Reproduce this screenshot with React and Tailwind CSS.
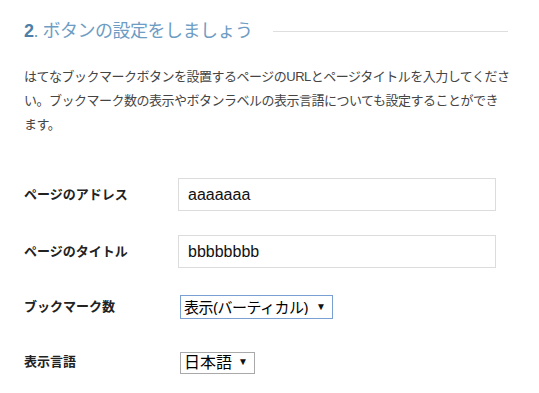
import React, { useState } from "react";

function SelectBox({ value, options, onChange, className, textClass, focused }) {
  return (
    <div className={"relative " + className}>
      <select
        value={value}
        onChange={(e) => onChange(e.target.value)}
        className={
          "appearance-none w-full h-full bg-white pl-[3px] pr-5 leading-none text-black outline-none rounded-none border " +
          textClass +
          " " +
          (focused ? "border-[#7a9fd2]" : "border-[#a9a9a9]")
        }
      >
        {options.map((o) => (
          <option key={o} value={o}>
            {o}
          </option>
        ))}
      </select>
      {/* dropdown arrow */}
      <span className="pointer-events-none absolute right-[7px] top-1/2 -translate-y-1/2 text-[10px] leading-none text-[#111]">
        ▼
      </span>
    </div>
  );
}

export default function App() {
  const [address, setAddress] = useState("aaaaaaa");
  const [title, setTitle] = useState("bbbbbbbb");
  const [layout, setLayout] = useState("表示(バーティカル)");
  const [lang, setLang] = useState("日本語");

  return (
    <div className="w-[539px] h-[393px] bg-white px-6 pt-[17px] font-['Liberation_Sans','Noto_Sans_CJK_JP',sans-serif] text-[#333]">
      {/* heading */}
      <div className="flex items-center h-7">
        <h2 className="text-[18px] leading-7 font-normal tracking-[-0.5px] text-[#6d9cc4] whitespace-nowrap">
          <span className="font-bold text-[#4d7fa8]">2</span>. ボタンの設定をしましょう
        </h2>
        <div className="flex-1 h-px bg-[#dedede] ml-5 mr-[7px]" />
      </div>

      <p className="mt-5 text-[13px] leading-6 tracking-[-0.5px] text-[#444] whitespace-nowrap">
        はてなブックマークボタンを設置するページのURLとページタイトルを入力してくださ
        <br />
        い。ブックマーク数の表示やボタンラベルの表示言語についても設定することができ
        <br />
        ます。
      </p>

      <div className="mt-[41px] flex items-center">
        <label className="w-[154px] text-[13px] font-bold text-[#222]">ページのアドレス</label>
        <input
          value={address}
          onChange={(e) => setAddress(e.target.value)}
          className="w-[318px] h-[33px] border border-[#dcdcdc] px-[9px] text-[16px] text-[#111] outline-none"
        />
      </div>

      <div className="mt-6 flex items-center">
        <label className="w-[154px] text-[13px] font-bold text-[#222]">ページのタイトル</label>
        <input
          value={title}
          onChange={(e) => setTitle(e.target.value)}
          className="w-[318px] h-[33px] border border-[#dcdcdc] px-[9px] text-[16px] text-[#111] outline-none"
        />
      </div>

      <div className="mt-[27px] flex items-center">
        <label className="w-[156px] text-[13px] font-bold text-[#222]">ブックマーク数</label>
        <SelectBox
          value={layout}
          onChange={setLayout}
          options={["表示(バーティカル)", "表示(ホリゾンタル)", "非表示"]}
          className="w-[153px] h-6"
          textClass="text-[15px] tracking-[-0.5px]"
          focused
        />
      </div>

      <div className="mt-8 flex items-center">
        <label className="w-[156px] text-[13px] font-bold text-[#222]">表示言語</label>
        <SelectBox
          value={lang}
          onChange={setLang}
          options={["日本語", "English"]}
          className="w-[75px] h-[22px]"
          textClass="text-[16px]"
        />
      </div>
    </div>
  );
}
